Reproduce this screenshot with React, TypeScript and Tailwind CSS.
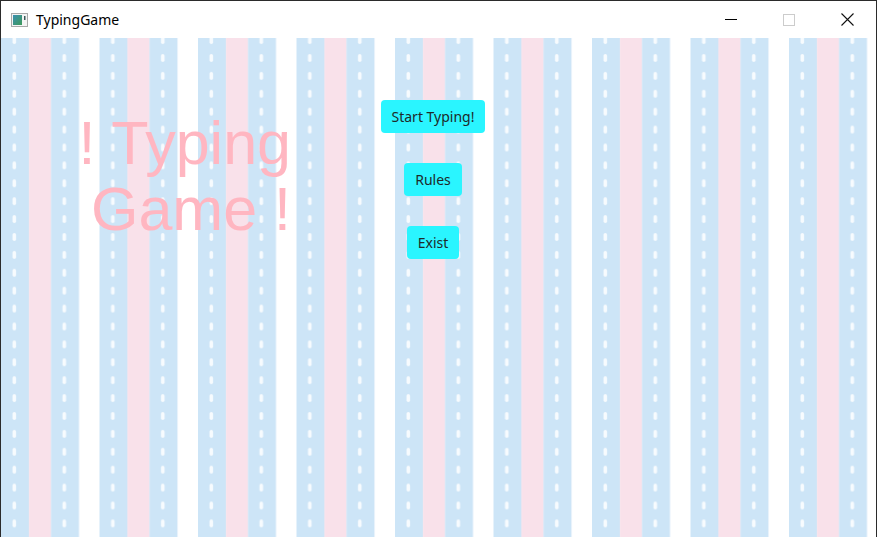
import React from 'react'

const btn = 'h-[33px] px-[11px] rounded-[4px] bg-[#2af5ff] text-[#1e2a2a] text-[14px] leading-none flex items-center'

function AppIcon() {
  return (
    <svg width="17" height="14" viewBox="0 0 17 14" className="block">
      <defs>
        <linearGradient id="ico" x1="0" y1="0" x2="1" y2="1">
          <stop offset="0" stopColor="#3a8fb0" />
          <stop offset="1" stopColor="#3f9a5a" />
        </linearGradient>
      </defs>
      <rect x="0.5" y="0.5" width="16" height="13" fill="#f4f4f4" stroke="#a9a9a9" />
      <rect x="2" y="2" width="9" height="10" fill="url(#ico)" />
      <rect x="13" y="3" width="1.5" height="4" fill="#3c5a5a" />
    </svg>
  )
}

function Stripes() {
  return (
    <svg className="absolute inset-0 w-full h-full" aria-hidden>
      <defs>
        <pattern id="lanes" patternUnits="userSpaceOnUse" x="0" y="-1.9" width="98.5" height="17.9">
          <rect x="0" y="0" width="98.5" height="17.9" fill="#ffffff" />
          <rect x="0" y="0" width="28" height="17.9" fill="#cde5f7" />
          <rect x="28" y="0" width="22" height="17.9" fill="#f9e1ea" />
          <rect x="50" y="0" width="28" height="17.9" fill="#cde5f7" />
          <rect x="11.5" y="0" width="3.6" height="8" rx="1.8" fill="#f7fbfe" />
          <rect x="61.5" y="0" width="3.6" height="8" rx="1.8" fill="#f7fbfe" />
        </pattern>
      </defs>
      <rect width="100%" height="100%" fill="url(#lanes)" />
    </svg>
  )
}

export default function App() {
  return (
    <div className="w-[877px] h-[537px] overflow-hidden bg-white border-x border-t border-[#2b2b2b] flex flex-col">
      {/* title bar */}
      <div className="h-[37px] shrink-0 flex items-center bg-white" style={{ fontFamily: '"Noto Sans", "Open Sans", sans-serif' }}>
        <div className="pl-[10px] pr-[8px]"><AppIcon /></div>
        <span className="text-[14px] text-black -mt-[1px]">TypingGame</span>
        <div className="ml-auto flex items-center h-full">
          <div className="w-[58px] h-full flex items-center justify-center">
            <div className="w-[12px] h-px bg-black" />
          </div>
          <div className="w-[58px] h-full flex items-center justify-center">
            <div className="w-[12px] h-[12px] border border-[#cccccc]" />
          </div>
          <div className="w-[58px] h-full flex items-center justify-center">
            <svg width="13" height="13" viewBox="0 0 13 13">
              <path d="M0.5 0.5 L12.5 12.5 M12.5 0.5 L0.5 12.5" stroke="#111" strokeWidth="1.1" />
            </svg>
          </div>
        </div>
      </div>

      {/* game area */}
      <div className="relative flex-1">
        <Stripes />
        <div className="relative flex">
          <div className="w-[290px] pt-[72px] text-right text-[61px] leading-[66px] text-[#ffb6c1]" style={{ fontFamily: '"Liberation Sans", Arial, sans-serif' }}>
            <div>! Typing</div>
            <div>Game !</div>
          </div>
          <div className="w-[284px] pt-[62px] flex flex-col items-center gap-[30px]" style={{ fontFamily: '"Noto Sans", "Open Sans", sans-serif' }}>
            <button className={btn}>Start Typing!</button>
            <button className={btn}>Rules</button>
            <button className={btn}>Exist</button>
          </div>
        </div>
      </div>
    </div>
  )
}
